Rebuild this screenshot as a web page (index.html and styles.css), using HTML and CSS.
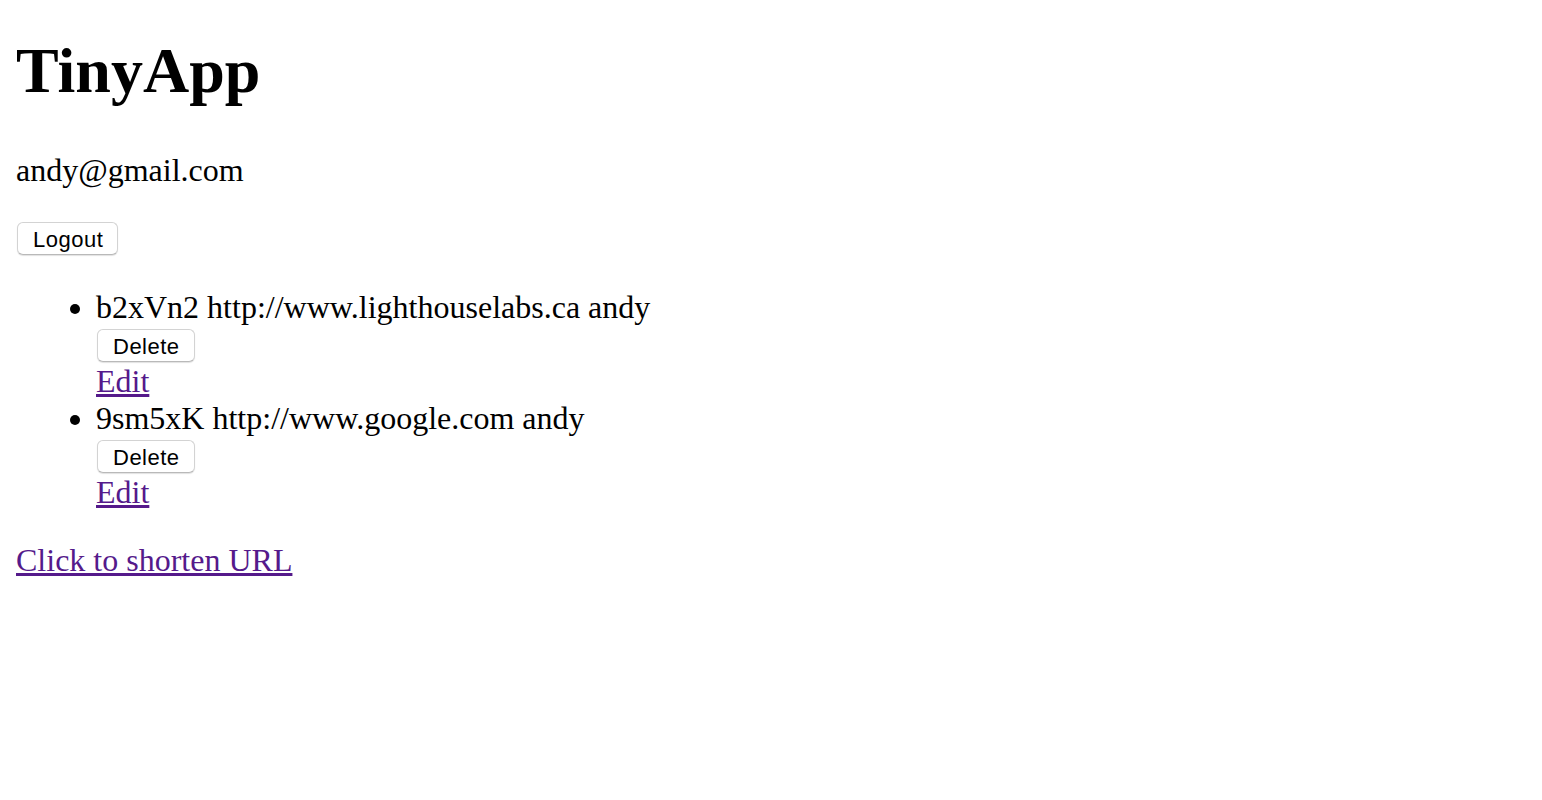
FILE: index.html
```html
<!DOCTYPE html>
<html>
<head>
<meta charset="utf-8">
<title>TinyApp</title>
<link rel="stylesheet" href="styles.css">
</head>
<body>
<h1 class="title">TinyApp</h1>
<p class="email">andy@gmail.com</p>
<form class="logout-form">
  <button class="btn" type="button">Logout</button>
</form>
<ul class="url-list">
  <li class="url-item">
    <span class="url-line">b2xVn2 http://www.lighthouselabs.ca andy</span>
    <form class="delete-form"><button class="btn" type="button">Delete</button></form>
    <a class="link edit" href="#">Edit</a>
  </li>
  <li class="url-item">
    <span class="url-line">9sm5xK http://www.google.com andy</span>
    <form class="delete-form"><button class="btn" type="button">Delete</button></form>
    <a class="link edit" href="#">Edit</a>
  </li>
</ul>
<a class="link shorten" href="#">Click to shorten URL</a>
</body>
</html>
```

FILE: styles.css
```css
html, body {
  background: #ffffff;
}
body {
  margin: 0;
  padding: 0 16px;
  font-family: "Liberation Serif", "Times New Roman", serif;
  font-size: 32px;
  line-height: 37px;
  color: #000000;
}
.title {
  font-size: 64px;
  line-height: 74px;
  font-weight: bold;
  margin: 0;
  padding-top: 34px;
}
.email {
  margin: 44px 0 0;
}
.logout-form {
  margin: 33px 0 0;
  display: flex;
}
.delete-form {
  margin: 3px 0 0;
  display: flex;
}
.btn {
  font-family: "Liberation Sans", Arial, sans-serif;
  font-size: 22px;
  letter-spacing: 0.5px;
  line-height: 29px;
  height: 33px;
  padding: 2px 14px 0 15px;
  margin: 0 0 0 1px;
  background: #ffffff;
  color: #000000;
  border: 1px solid #d3d3d3;
  border-bottom-color: #b9b9b9;
  border-radius: 6px;
  box-shadow: 0 1px 1px rgba(0, 0, 0, 0.12);
}
.url-list {
  margin: 34px 0 0;
  padding-left: 80px;
}
.url-item {
  list-style: disc;
  display: list-item;
}
.url-line {
  display: block;
}
.edit {
  display: inline-block;
  margin-top: 1px;
}
.link {
  color: #551a8b;
  text-decoration: underline;
}
.shorten {
  display: inline-block;
  margin-top: 31px;
}
```
